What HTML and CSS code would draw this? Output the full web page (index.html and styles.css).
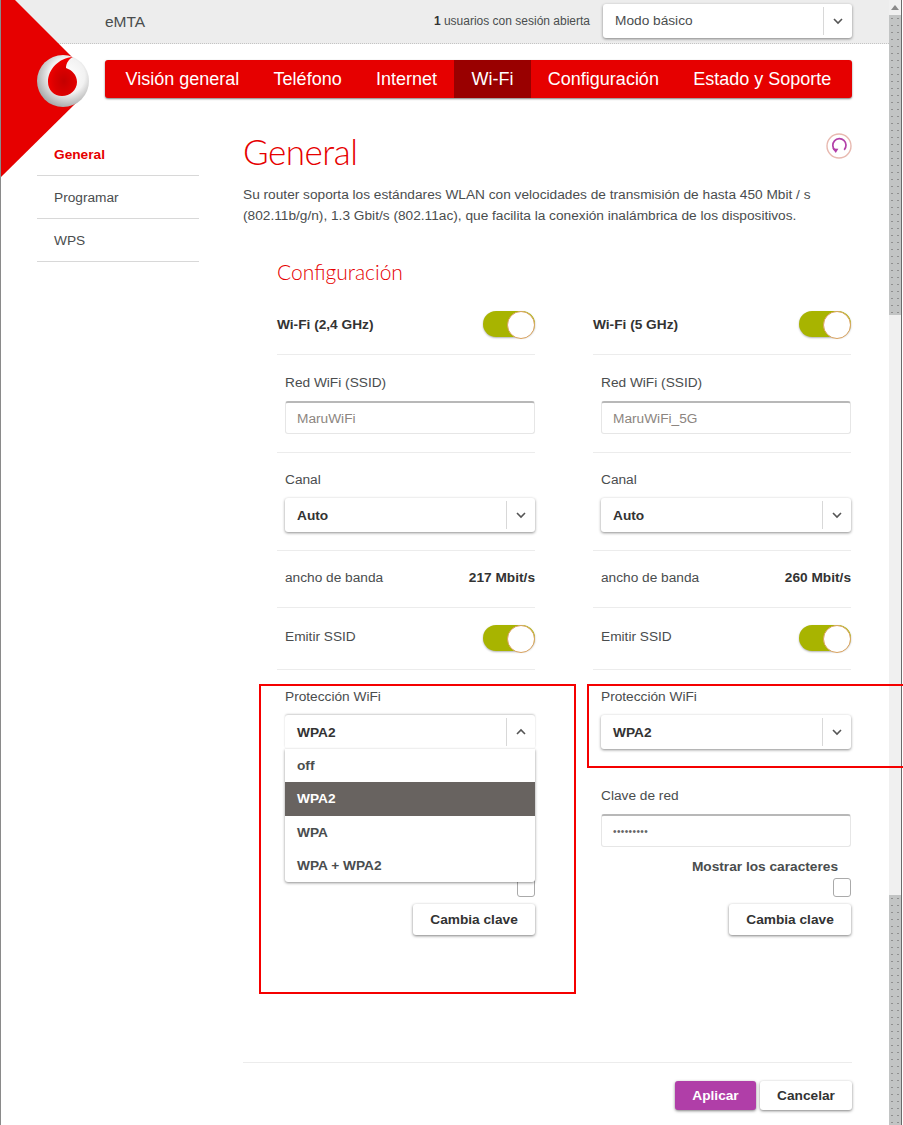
FILE: index.html
```html
<!DOCTYPE html>
<html lang="es">
<head>
    <meta charset="UTF-8">
    <title>eMTA - General</title>
    <link rel="stylesheet" href="styles.css">
</head>
<body>
    <div class="page">
        <div class="content">
            <header class="top-bar">
                <span class="device-name">eMTA</span>
                <div class="top-right">
                    <span class="session-info"><b>1</b> usuarios con sesión abierta</span>
                    <div class="select select-mode">
                        <span class="select-value">Modo básico</span>
                        <span class="select-arrow"><svg width="12" height="8" viewBox="0 0 12 8"><path d="M2 2l4 4 4-4" fill="none" stroke="#555" stroke-width="1.6"/></svg></span>
                    </div>
                </div>
            </header>

            <div class="nav-row">
                <nav class="main-nav">
                    <a href="#">Visión general</a>
                    <a href="#">Teléfono</a>
                    <a href="#">Internet</a>
                    <a href="#" class="active">Wi-Fi</a>
                    <a href="#">Configuración</a>
                    <a href="#">Estado y Soporte</a>
                </nav>
            </div>

            <div class="body-row">
                <aside class="side-nav">
                    <a href="#" class="active">General</a>
                    <a href="#">Programar</a>
                    <a href="#">WPS</a>
                </aside>

                <main class="main">
                    <div class="title-row">
                        <h1 class="title">General</h1>
                        <svg class="refresh" width="26" height="26" viewBox="0 0 26 26">
                            <circle cx="13" cy="13" r="12" fill="none" stroke="#e8b9b0" stroke-width="1.4"/>
                            <path d="M9 17.2A6.6 6.6 0 1 1 18.2 16.8" fill="none" stroke="#b23fa8" stroke-width="1.7"/>
                            <path d="M6.4 15.4l6 .3-2.6 4.3z" fill="#b23fa8"/>
                        </svg>
                    </div>
                    <p class="intro">Su router soporta los estándares WLAN con velocidades de transmisión de hasta 450 Mbit / s<br>(802.11b/g/n), 1.3 Gbit/s (802.11ac), que facilita la conexión inalámbrica de los dispositivos.</p>

                    <h2 class="subtitle">Configuración</h2>

                    <div class="bands">
                        <section class="band">
                            <div class="row row-head">
                                <b>Wi-Fi (2,4 GHz)</b>
                                <span class="toggle"></span>
                            </div>
                            <div class="row row-field">
                                <label>Red WiFi (SSID)</label>
                                <div class="input">MaruWiFi</div>
                            </div>
                            <div class="row row-field row-canal">
                                <label>Canal</label>
                                <div class="select">
                                    <span class="select-value">Auto</span>
                                    <span class="select-arrow"><svg width="12" height="8" viewBox="0 0 12 8"><path d="M2 2l4 4 4-4" fill="none" stroke="#555" stroke-width="1.6"/></svg></span>
                                </div>
                            </div>
                            <div class="row row-info">
                                <span>ancho de banda</span>
                                <b>217 Mbit/s</b>
                            </div>
                            <div class="row row-switch">
                                <span class="switch-label">Emitir SSID</span>
                                <span class="toggle"></span>
                            </div>
                            <div class="security">
                                <label>Protección WiFi</label>
                                <div class="select select-open">
                                    <span class="select-value">WPA2</span>
                                    <span class="select-arrow"><svg width="12" height="8" viewBox="0 0 12 8"><path d="M2 6l4-4 4 4" fill="none" stroke="#555" stroke-width="1.6"/></svg></span>
                                    <ul class="select-menu">
                                        <li>off</li>
                                        <li class="selected">WPA2</li>
                                        <li>WPA</li>
                                        <li>WPA + WPA2</li>
                                    </ul>
                                </div>
                                <span class="checkbox checkbox-under-menu"></span>
                                <button class="btn btn-key">Cambia clave</button>
                            </div>
                        </section>

                        <section class="band">
                            <div class="row row-head">
                                <b>Wi-Fi (5 GHz)</b>
                                <span class="toggle"></span>
                            </div>
                            <div class="row row-field">
                                <label>Red WiFi (SSID)</label>
                                <div class="input">MaruWiFi_5G</div>
                            </div>
                            <div class="row row-field row-canal">
                                <label>Canal</label>
                                <div class="select">
                                    <span class="select-value">Auto</span>
                                    <span class="select-arrow"><svg width="12" height="8" viewBox="0 0 12 8"><path d="M2 2l4 4 4-4" fill="none" stroke="#555" stroke-width="1.6"/></svg></span>
                                </div>
                            </div>
                            <div class="row row-info">
                                <span>ancho de banda</span>
                                <b>260 Mbit/s</b>
                            </div>
                            <div class="row row-switch">
                                <span class="switch-label">Emitir SSID</span>
                                <span class="toggle"></span>
                            </div>
                            <div class="security">
                                <label>Protección WiFi</label>
                                <div class="select">
                                    <span class="select-value">WPA2</span>
                                    <span class="select-arrow"><svg width="12" height="8" viewBox="0 0 12 8"><path d="M2 2l4 4 4-4" fill="none" stroke="#555" stroke-width="1.6"/></svg></span>
                                </div>
                                <label class="key-label">Clave de red</label>
                                <div class="input input-pass">•••••••••</div>
                                <div class="show-chars">Mostrar los caracteres</div>
                                <span class="checkbox"></span>
                                <button class="btn btn-key">Cambia clave</button>
                            </div>
                        </section>
                    </div>

                    <div class="actions">
                        <button class="btn btn-apply">Aplicar</button>
                        <button class="btn btn-cancel">Cancelar</button>
                    </div>
                </main>
            </div>
        </div>

        <div class="scrollbar">
            <div class="scroll-up"><svg width="8" height="5" viewBox="0 0 8 5"><path d="M4 0l4 5H0z" fill="#8a8a8a"/></svg></div>
            <div class="scroll-thumb thumb-a"></div>
            <div class="scroll-track"></div>
            <div class="scroll-thumb thumb-b"></div>
        </div>

        <!-- red corner and logo -->
        <svg class="corner" width="76" height="178" viewBox="0 0 76 178"><path d="M0 0H14L75 61V103L0 177z" fill="#e60000"/></svg>
        <svg class="logo" width="52" height="52" viewBox="0 0 52 52">
            <defs>
                <radialGradient id="ball" cx="58%" cy="40%" r="62%">
                    <stop offset="0" stop-color="#ffffff"/>
                    <stop offset="0.55" stop-color="#f2f2f2"/>
                    <stop offset="1" stop-color="#a8a8a8"/>
                </radialGradient>
                <radialGradient id="drop" cx="55%" cy="62%" r="58%">
                    <stop offset="0" stop-color="#c40000"/>
                    <stop offset="0.6" stop-color="#dc0000"/>
                    <stop offset="1" stop-color="#f40000"/>
                </radialGradient>
            </defs>
            <circle cx="26" cy="26" r="26" fill="url(#ball)"/>
            <path d="M36 2C22 3 11 14 11 27C11 35 17 41 25 41C33 41 40 35 40 27C40 20 35 15 29 13C29 8 32 4 36 2Z" fill="url(#drop)"/>
        </svg>

        <!-- annotation frames drawn over the screenshot -->
        <div class="mark mark-left"></div>
        <div class="mark mark-right"></div>
    </div>
</body>
</html>
```

FILE: styles.css
```css
* {
    margin: 0;
    padding: 0;
    box-sizing: border-box;
}

html, body {
    overflow: hidden;
}

body {
    font-family: "Liberation Sans", Arial, sans-serif;
    font-size: 13.7px;
    color: #4a4d4e;
    background: #ffffff;
}

.page {
    position: relative;
    display: flex;
    width: 903px;
    height: 1125px;
    overflow: hidden;
    border-left: 1px solid #8a8a8a;
}

.content {
    width: 888px;
    flex: none;
}

/* Top bar */
.top-bar {
    display: flex;
    align-items: center;
    justify-content: space-between;
    height: 44px;
    padding: 0 37px 1px 104px;
    background: #ededed;
    border-bottom: 1px dotted #c4c4c4;
}

.device-name {
    margin-top: 2px;
    font-size: 15.5px;
    color: #4a4d4e;
}

.top-right {
    display: flex;
    align-items: center;
    gap: 13px;
}

.session-info {
    font-size: 12px;
}

.session-info b {
    color: #333333;
}

/* Select */
.select {
    position: relative;
    display: flex;
    align-items: center;
    justify-content: space-between;
    height: 34px;
    background: #ffffff;
    border-radius: 3px;
    box-shadow: 0 1px 3px rgba(0, 0, 0, 0.45);
    font-weight: 700;
    color: #333333;
}

.select-value {
    padding-left: 12px;
}

.select-arrow {
    display: flex;
    align-items: center;
    justify-content: center;
    width: 29px;
    height: 28px;
    border-left: 1px solid #d8d8d8;
}

.select-mode {
    width: 249px;
    font-weight: 400;
    color: #4a4d4e;
}

.select-mode .select-value {
    padding-bottom: 2px;
}

.select-open {
    box-shadow: 0 -1px 2px rgba(0, 0, 0, 0.2);
}

.select-menu {
    position: absolute;
    top: 100%;
    left: 0;
    right: 0;
    z-index: 2;
    list-style: none;
    background: #ffffff;
    border-radius: 0 0 3px 3px;
    box-shadow: 0 1px 3px rgba(0, 0, 0, 0.45);
}

.select-menu li {
    height: 33.3px;
    line-height: 33px;
    padding-left: 12px;
    color: #4a4d4e;
}

.select-menu .selected {
    background: #686360;
    color: #ffffff;
}

/* Main navigation */
.nav-row {
    padding: 16px 37px 0 104px;
}

.main-nav {
    display: flex;
    height: 38px;
    padding-left: 3.3px;
    background: #e60000;
    border-radius: 3px;
    box-shadow: 0 1px 2px rgba(0, 0, 0, 0.5);
}

.main-nav a {
    padding: 0 17.2px;
    font-size: 18px;
    line-height: 38px;
    color: #ffffff;
    text-decoration: none;
}

.main-nav .active {
    background: #990000;
}

/* Body */
.body-row {
    display: flex;
}

.side-nav {
    flex: none;
    width: 162px;
    margin: 35px 44px 0 36px;
    align-self: flex-start;
}

.side-nav a {
    display: block;
    height: 43px;
    padding: 12px 0 0 17px;
    line-height: 20px;
    color: #4a4d4e;
    text-decoration: none;
    border-bottom: 1px solid #d8d8d8;
}

.side-nav .active {
    font-weight: 700;
    color: #e60000;
}

.main {
    width: 609px;
    flex: none;
}

.title-row {
    display: flex;
    justify-content: space-between;
    align-items: flex-start;
    padding-top: 30px;
}

.title {
    font-family: Lato, "Liberation Sans", sans-serif;
    font-size: 35px;
    font-weight: 300;
    letter-spacing: -0.5px;
    line-height: 46px;
    color: #e60000;
}

.refresh {
    margin-top: 5px;
}

.intro {
    margin-top: 10px;
    line-height: 21px;
}

.subtitle {
    margin: 31px 0 0 34px;
    font-family: Lato, "Liberation Sans", sans-serif;
    font-size: 21px;
    font-weight: 300;
    line-height: 30px;
    color: #e60000;
}

/* Band columns */
.bands {
    display: grid;
    grid-template-columns: 258px 258px;
    column-gap: 58px;
    margin: 11px 0 0 34px;
}

.row {
    border-bottom: 1px solid #ececec;
}

.row-head, .row-info, .row-switch {
    display: flex;
    align-items: center;
    justify-content: space-between;
}

.row-head {
    padding: 13px 0 17px;
    height: 57px;
}

.row-head b {
    color: #333333;
}

.row-field {
    padding: 18px 0 18px 8px;
}

.row-canal {
    padding-top: 17px;
}

.row-info {
    padding: 17px 0 19px 8px;
    line-height: 20px;
}

.row-info b {
    color: #333333;
}

.row-switch {
    padding: 17px 0 18px 8px;
}

.switch-label {
    margin-bottom: 4px;
}

label {
    display: block;
    line-height: 20px;
    margin-bottom: 8px;
}

.toggle {
    position: relative;
    display: block;
    width: 52px;
    height: 26px;
    background: #a8b400;
    border-radius: 13px;
    box-shadow: 0 1px 2px rgba(0, 0, 0, 0.3);
}

.toggle::after {
    content: '';
    position: absolute;
    top: 0;
    right: 0;
    width: 26px;
    height: 26px;
    background: #ffffff;
    border: 1px solid #d9a25f;
    border-radius: 50%;
}

.input {
    height: 33px;
    padding-left: 11px;
    line-height: 32px;
    color: #8c8580;
    background: #ffffff;
    border: 1px solid #e6e6e6;
    border-top: 2px solid #b8b8b8;
    border-radius: 3px;
}

.input-pass {
    font-size: 10px;
    letter-spacing: 0.4px;
    color: #666666;
}

.security {
    padding: 17px 0 0 8px;
    display: flex;
    flex-direction: column;
}

.key-label {
    margin-top: 37px;
    margin-bottom: 8px;
}

.show-chars {
    margin-top: 10px;
    padding-right: 13px;
    text-align: right;
    line-height: 20px;
    font-weight: 700;
}

.checkbox {
    display: block;
    align-self: flex-end;
    width: 18px;
    height: 19px;
    margin-top: 1px;
    border: 1px solid #aaaaaa;
    border-radius: 3px;
}

.checkbox-under-menu {
    margin-top: 129px;
}

.btn {
    height: 31px;
    font-family: inherit;
    font-size: 13.7px;
    font-weight: 700;
    color: #333333;
    background: #ffffff;
    border: none;
    border-radius: 3px;
    box-shadow: 0 1px 3px rgba(0, 0, 0, 0.5);
}

.btn-key {
    align-self: flex-end;
    width: 122px;
    margin-top: 7px;
}

.actions {
    display: flex;
    justify-content: flex-end;
    gap: 4px;
    margin: 127px 0 0;
    padding-top: 18px;
    border-top: 1px solid #ececec;
}

.btn-apply {
    width: 81px;
    height: 29px;
    color: #ffffff;
    background: #b03ea8;
}

.btn-cancel {
    width: 92px;
    height: 29px;
}

/* Scrollbar */
.scrollbar {
    display: flex;
    flex-direction: column;
    width: 13px;
    flex: none;
    border-right: 1px solid #6a6a6a;
    background: #f0f0f0;
}

.scroll-up {
    display: flex;
    align-items: center;
    justify-content: center;
    height: 15px;
}

.scroll-thumb {
    background: #c2c4c4 radial-gradient(circle, #8f8f8f 0.7px, transparent 1px) 0 0 / 6px 7px;
}

.thumb-a {
    height: 300px;
}

.scroll-track {
    height: 580px;
}

.thumb-b {
    flex: 1;
}

/* Overlays */
.corner {
    position: absolute;
    top: 0;
    left: 0;
}

.logo {
    position: absolute;
    top: 55px;
    left: 36px;
}

.mark {
    position: absolute;
    z-index: 3;
    border: 2px solid #f50000;
}

.mark-left {
    top: 684px;
    left: 258px;
    width: 317px;
    height: 310px;
}

.mark-right {
    top: 684px;
    left: 586px;
    width: 330px;
    height: 84px;
}
```
